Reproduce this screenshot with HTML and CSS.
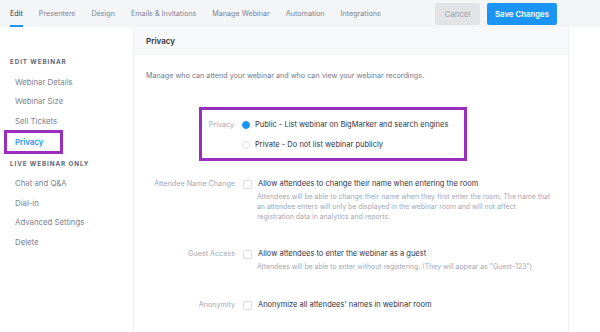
FILE: index.html
```html
<!DOCTYPE html>
<html lang="en">
<head>
    <meta charset="UTF-8">
    <meta name="viewport" content="width=device-width, initial-scale=1.0">
    <title>Edit Webinar - Privacy</title>
    <link rel="stylesheet" href="styles.css">
</head>
<body>
    <div class="topbar">
        <nav class="tabs">
            <a class="tab active">Edit</a>
            <a class="tab">Presenters</a>
            <a class="tab">Design</a>
            <a class="tab">Emails &amp; Invitations</a>
            <a class="tab">Manage Webinar</a>
            <a class="tab">Automation</a>
            <a class="tab">Integrations</a>
        </nav>
        <div class="actions">
            <button class="btn btn-cancel">Cancel</button>
            <button class="btn btn-save">Save Changes</button>
        </div>
    </div>

    <div class="layout">
        <!-- Menú lateral -->
        <aside class="sidebar">
            <div class="side-title">Edit Webinar</div>
            <a class="side-item">Webinar Details</a>
            <a class="side-item">Webinar Size</a>
            <a class="side-item">Sell Tickets</a>
            <a class="side-item active highlight">Privacy</a>
            <div class="side-title">Live Webinar Only</div>
            <a class="side-item">Chat and Q&amp;A</a>
            <a class="side-item">Dial-in</a>
            <a class="side-item">Advanced Settings</a>
            <a class="side-item">Delete</a>
        </aside>

        <!-- Panell principal -->
        <main class="panel">
            <div class="panel-header">Privacy</div>
            <div class="panel-body">
                <p class="intro">Manage who can attend your webinar and who can view your webinar recordings.</p>

                <div class="privacy-box">
                    <div class="row">
                        <div class="row-label">Privacy</div>
                        <div class="row-content">
                            <label class="option"><span class="radio checked"></span>Public - List webinar on BigMarker and search engines</label>
                            <label class="option"><span class="radio"></span>Private - Do not list webinar publicly</label>
                        </div>
                    </div>
                </div>

                <div class="row setting">
                    <div class="row-label">Attendee Name Change</div>
                    <div class="row-content">
                        <label class="option"><span class="check"></span>Allow attendees to change their name when entering the room</label>
                        <p class="help">Attendees will be able to change their name when they first enter the room. The name that an attendee enters will only be displayed in the webinar room and will not affect registration data in analytics and reports.</p>
                    </div>
                </div>

                <div class="row setting">
                    <div class="row-label">Guest Access</div>
                    <div class="row-content">
                        <label class="option"><span class="check"></span>Allow attendees to enter the webinar as a guest</label>
                        <p class="help">Attendees will be able to enter without registering. (They will appear as "Guest-123")</p>
                    </div>
                </div>

                <div class="row setting setting-last">
                    <div class="row-label">Anonymity</div>
                    <div class="row-content">
                        <label class="option"><span class="check"></span>Anonymize all attendees' names in webinar room</label>
                    </div>
                </div>
            </div>
        </main>
    </div>
</body>
</html>
```

FILE: styles.css
```css
:root {
    --blue: #1a95f3;
    --purple: #9a2fbf;
    --dark: #30343f;
    --muted: #7d8291;
    --light: #a3a8b6;
    --bar: #f4f5f7;
}

body {
    margin: 0;
    font-family: Inter, "Noto Sans", sans-serif;
    color: var(--dark);
    background-color: white;
}

.topbar {
    display: flex;
    justify-content: space-between;
    align-items: center;
    height: 27px;
    background-color: var(--bar);
    padding-left: 10px;
    padding-right: 43px;
}

.tabs {
    display: flex;
    gap: 16px;
    align-self: stretch;
}

.tab {
    display: flex;
    align-items: center;
    font-size: 7.2px;
    color: var(--muted);
    border-bottom: 2px solid transparent;
    padding-top: 2px;
}

.tab.active {
    color: var(--dark);
    border-bottom-color: var(--blue);
}

.actions {
    display: flex;
    gap: 7px;
}

.btn {
    height: 22px;
    border: none;
    border-radius: 2px;
    font-family: inherit;
    font-size: 7.8px;
    padding: 0;
    cursor: pointer;
}

.btn-cancel {
    width: 45px;
    background-color: #e2e3e6;
    color: #9a9ea9;
}

.btn-save {
    width: 70px;
    background-color: var(--blue);
    color: white;
    font-weight: 600;
}

.layout {
    display: flex;
}

.sidebar {
    width: 133px;
    padding-top: 30px;
    display: flex;
    flex-direction: column;
    align-items: flex-start;
}

.side-title {
    font-size: 6.3px;
    font-weight: 700;
    letter-spacing: 0.9px;
    text-transform: uppercase;
    color: #5f6576;
    padding-left: 10px;
    height: 11px;
    line-height: 11px;
}

.side-item {
    font-size: 7.8px;
    color: var(--muted);
    padding-left: 15px;
    height: 19.7px;
    line-height: 19.7px;
}

.side-title + .side-item {
    margin-top: 4.5px;
}

.side-item.active {
    color: var(--blue);
    font-weight: 600;
}

.side-item.highlight {
    border: 3px solid var(--purple);
    padding-left: 8px;
    width: 45px;
    height: 18px;
    line-height: 18px;
    margin-left: 4px;
    margin-top: -2px;
    margin-bottom: 5px;
}

.panel {
    width: 434px;
    border-left: 1px solid #eef0f3;
    border-right: 1px solid #eef0f3;
    min-height: 305px;
}

.panel-header {
    height: 28px;
    line-height: 28px;
    background-color: #f7f8fa;
    padding-left: 12px;
    font-size: 8px;
    font-weight: 600;
}

.panel-body {
    padding: 16px 12px 0 12px;
}

.intro {
    margin: 0;
    font-size: 7.2px;
    color: #737887;
}

.privacy-box {
    border: 3px solid var(--purple);
    width: 262px;
    margin: 27px 0 0 53px;
    padding: 10px 0 8px 0;
}

.row {
    display: flex;
    align-items: flex-start;
}

.row-label {
    width: 89px;
    text-align: right;
    font-size: 7.2px;
    color: var(--light);
    padding-right: 8px;
    line-height: 10px;
}

.privacy-box .row-label {
    width: 32px;
}

.row-content {
    flex: 1;
}

.option {
    display: flex;
    align-items: center;
    gap: 5px;
    font-size: 7.5px;
    color: var(--dark);
    line-height: 10px;
}

.privacy-box .option + .option {
    margin-top: 10px;
}

.radio {
    width: 6px;
    height: 6px;
    border-radius: 50%;
    border: 1px solid #e1e3e8;
    background-color: white;
}

.radio.checked {
    border-color: var(--blue);
    background-color: var(--blue);
}

.check {
    width: 7px;
    height: 7px;
    border: 1px solid #dfe1e6;
    border-radius: 1px;
    margin-right: 1px;
}

.setting {
    margin-top: 18px;
}

.setting + .setting {
    margin-top: 27px;
}

.setting + .setting-last {
    margin-top: 28px;
}

.help {
    margin: 3px 0 0 14px;
    font-size: 6.9px;
    line-height: 10px;
    color: var(--light);
    max-width: 295px;
}
```
